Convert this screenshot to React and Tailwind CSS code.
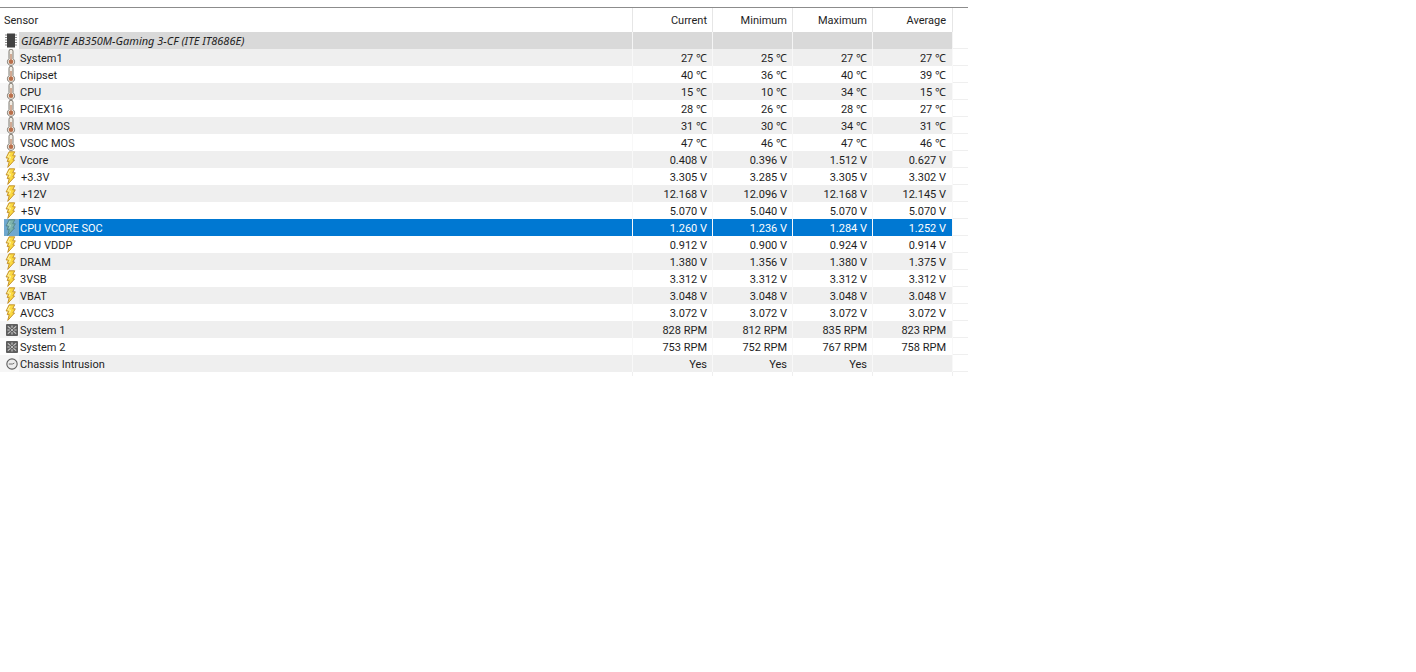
const FONT = "font-['Roboto','Liberation_Sans',sans-serif]";

function Thermo() {
  return (
    <svg width="10" height="17" viewBox="0 0 10 17" className="block">
      <path d="M3 2.2a2 2 0 0 1 4 0v7.6a3.6 3.6 0 1 1-4 0z" fill="#f1ece4" stroke="#7f7a72" strokeWidth="1" />
      <rect x="4.2" y="5" width="1.6" height="6" fill="#c99a80" />
      <circle cx="5" cy="12.7" r="2.3" fill="#b9704c" />
    </svg>
  );
}

function Bolt({ dim }) {
  return (
    <svg width="11" height="17" viewBox="0 0 12 17" preserveAspectRatio="none" className="block">
      <path
        d="M4.5.8H10.6L8.4 4.8H11.2L8.6 9H10.4L3 16.4 4.6 10.6H2.4L3.8 7H1.2z"
        fill={dim ? "#7db3ab" : "#fbd940"}
        stroke={dim ? "#56868a" : "#c08f2c"}
        strokeWidth="1"
        strokeLinejoin="round"
      />
      <path d="M5.5 2 3 6h3l-1 3" fill="none" stroke={dim ? "#a8d0c8" : "#fff3a8"} strokeWidth="1" />
    </svg>
  );
}

function Chip() {
  return (
    <svg width="12" height="15" viewBox="0 0 12 15" className="block">
      <rect x="2" y="0.5" width="8" height="14" fill="#424242" />
      <path d="M0 2h2M0 4.5h2M0 7h2M0 9.5h2M0 12h2M10 2h2M10 4.5h2M10 7h2M10 9.5h2M10 12h2" stroke="#8a8a8a" strokeWidth="1" />
    </svg>
  );
}

function Fan() {
  return (
    <svg width="12" height="12" viewBox="0 0 13 13" className="block">
      <rect width="13" height="13" rx="1" fill="#5f5f5f" />
      <circle cx="6.5" cy="6.5" r="1.2" fill="#d0d0d0" />
      <path d="M2 2.5 5 5M11 2.5 8 5M2 10.5 5 8M11 10.5 8 8M6.5 1.5v2.5M6.5 9v2.5M1.5 6.5H4M9 6.5h2.5" stroke="#d0d0d0" strokeWidth="1.2" />
    </svg>
  );
}

function Clock() {
  return (
    <svg width="12" height="12" viewBox="0 0 13 13" className="block">
      <circle cx="6.5" cy="6.5" r="5.6" fill="#ececec" stroke="#5f5f5f" strokeWidth="1.2" />
      <path d="M3 6.5h4l2-1" fill="none" stroke="#666" strokeWidth="1" />
    </svg>
  );
}

const rows = [
  ["System1", "t", "27 ℃", "25 ℃", "27 ℃", "27 ℃"],
  ["Chipset", "t", "40 ℃", "36 ℃", "40 ℃", "39 ℃"],
  ["CPU", "t", "15 ℃", "10 ℃", "34 ℃", "15 ℃"],
  ["PCIEX16", "t", "28 ℃", "26 ℃", "28 ℃", "27 ℃"],
  ["VRM MOS", "t", "31 ℃", "30 ℃", "34 ℃", "31 ℃"],
  ["VSOC MOS", "t", "47 ℃", "46 ℃", "47 ℃", "46 ℃"],
  ["Vcore", "b", "0.408 V", "0.396 V", "1.512 V", "0.627 V"],
  ["+3.3V", "b", "3.305 V", "3.285 V", "3.305 V", "3.302 V"],
  ["+12V", "b", "12.168 V", "12.096 V", "12.168 V", "12.145 V"],
  ["+5V", "b", "5.070 V", "5.040 V", "5.070 V", "5.070 V"],
  ["CPU VCORE SOC", "b", "1.260 V", "1.236 V", "1.284 V", "1.252 V"],
  ["CPU VDDP", "b", "0.912 V", "0.900 V", "0.924 V", "0.914 V"],
  ["DRAM", "b", "1.380 V", "1.356 V", "1.380 V", "1.375 V"],
  ["3VSB", "b", "3.312 V", "3.312 V", "3.312 V", "3.312 V"],
  ["VBAT", "b", "3.048 V", "3.048 V", "3.048 V", "3.048 V"],
  ["AVCC3", "b", "3.072 V", "3.072 V", "3.072 V", "3.072 V"],
  ["System 1", "f", "828 RPM", "812 RPM", "835 RPM", "823 RPM"],
  ["System 2", "f", "753 RPM", "752 RPM", "767 RPM", "758 RPM"],
  ["Chassis Intrusion", "c", "Yes", "Yes", "Yes", ""],
];

function Icon({ kind, selected }) {
  if (kind === "t") return <Thermo />;
  if (kind === "b") return <Bolt dim={selected} />;
  if (kind === "f") return <Fan />;
  if (kind === "c") return <Clock />;
  return <Chip />;
}

function Row({ row, index }) {
  const [name, kind, ...vals] = row;
  const selected = name === "CPU VCORE SOC";
  const shaded = index % 2 === 0;
  const bg = selected ? "bg-[#0078d2] text-white" : shaded ? "bg-[#efefef]" : "bg-white";
  const nudge = kind === "t" || kind === "b" ? "pr-[2px]" : "";
  const indent = name.startsWith("+") ? "pl-[2px]" : "pl-[1px]";
  return (
    <div className="flex h-[17px] text-[11px] leading-[19px] text-[#1e1e1e]">
      <div className={`w-[4px] ${shaded && !selected ? "bg-[#f6f6f6]" : "bg-white"}`} />
      <div className={`w-[15px] flex items-center justify-center ${nudge} ${selected ? "bg-[#6fa8cf]" : shaded ? "bg-[#f6f6f6]" : "bg-white"}`}>
        <Icon kind={kind} selected={selected} />
      </div>
      <div className={`w-[614px] ${indent} border-r border-[#f8f8f8] ${bg}`}>{name}</div>
      {vals.map((v, i) => (
        <div key={i} className={`w-[80px] text-right border-r border-[#f8f8f8] ${i === 3 ? "pr-[6px]" : "pr-[5px]"} ${bg}`}>{v}</div>
      ))}
      <div className="w-[15px] border-b border-[#efefef] bg-white" />
    </div>
  );
}

export default function App() {
  return (
    <div className={`${FONT} w-[1416px] h-[672px] bg-white pt-[7px]`}>
      <div className="w-[968px]">
        <div className="flex h-[25px] border-t border-[#8c8c8c] text-[11px] leading-[25px] text-[#1e1e1e]">
          <div className="w-[633px] pl-[4px] border-r border-[#e6e6e6]">Sensor</div>
          {["Current", "Minimum", "Maximum", "Average"].map((h, i) => (
            <div key={h} className={`w-[80px] text-right border-r border-[#e6e6e6] ${i === 3 ? "pr-[6px]" : "pr-[5px]"}`}>{h}</div>
          ))}
        </div>
        <div className="flex h-[17px] text-[11px] leading-[18px] text-[#1e1e1e]">
          <div className="w-[19px] pl-[5px] flex items-center bg-white"><Chip /></div>
          <div className="w-[614px] pl-[2px] italic font-['Noto_Sans',sans-serif] bg-[#d9d9d9] border-r border-[#f4f4f4]">GIGABYTE AB350M-Gaming 3-CF (ITE IT8686E)</div>
          {[0, 1, 2, 3].map((i) => (
            <div key={i} className="w-[80px] bg-[#d9d9d9] border-r border-[#f4f4f4]" />
          ))}
          <div className="w-[15px] border-b border-[#efefef]" />
        </div>
        {rows.map((r, i) => (
          <Row key={r[0] + i} row={r} index={i} />
        ))}
        <div className="flex h-[4px]">
          <div className="w-[633px] border-r border-[#efefef]" />
          {[0, 1, 2, 3].map((i) => (
            <div key={i} className="w-[80px] border-r border-[#efefef]" />
          ))}
        </div>
      </div>
    </div>
  );
}
